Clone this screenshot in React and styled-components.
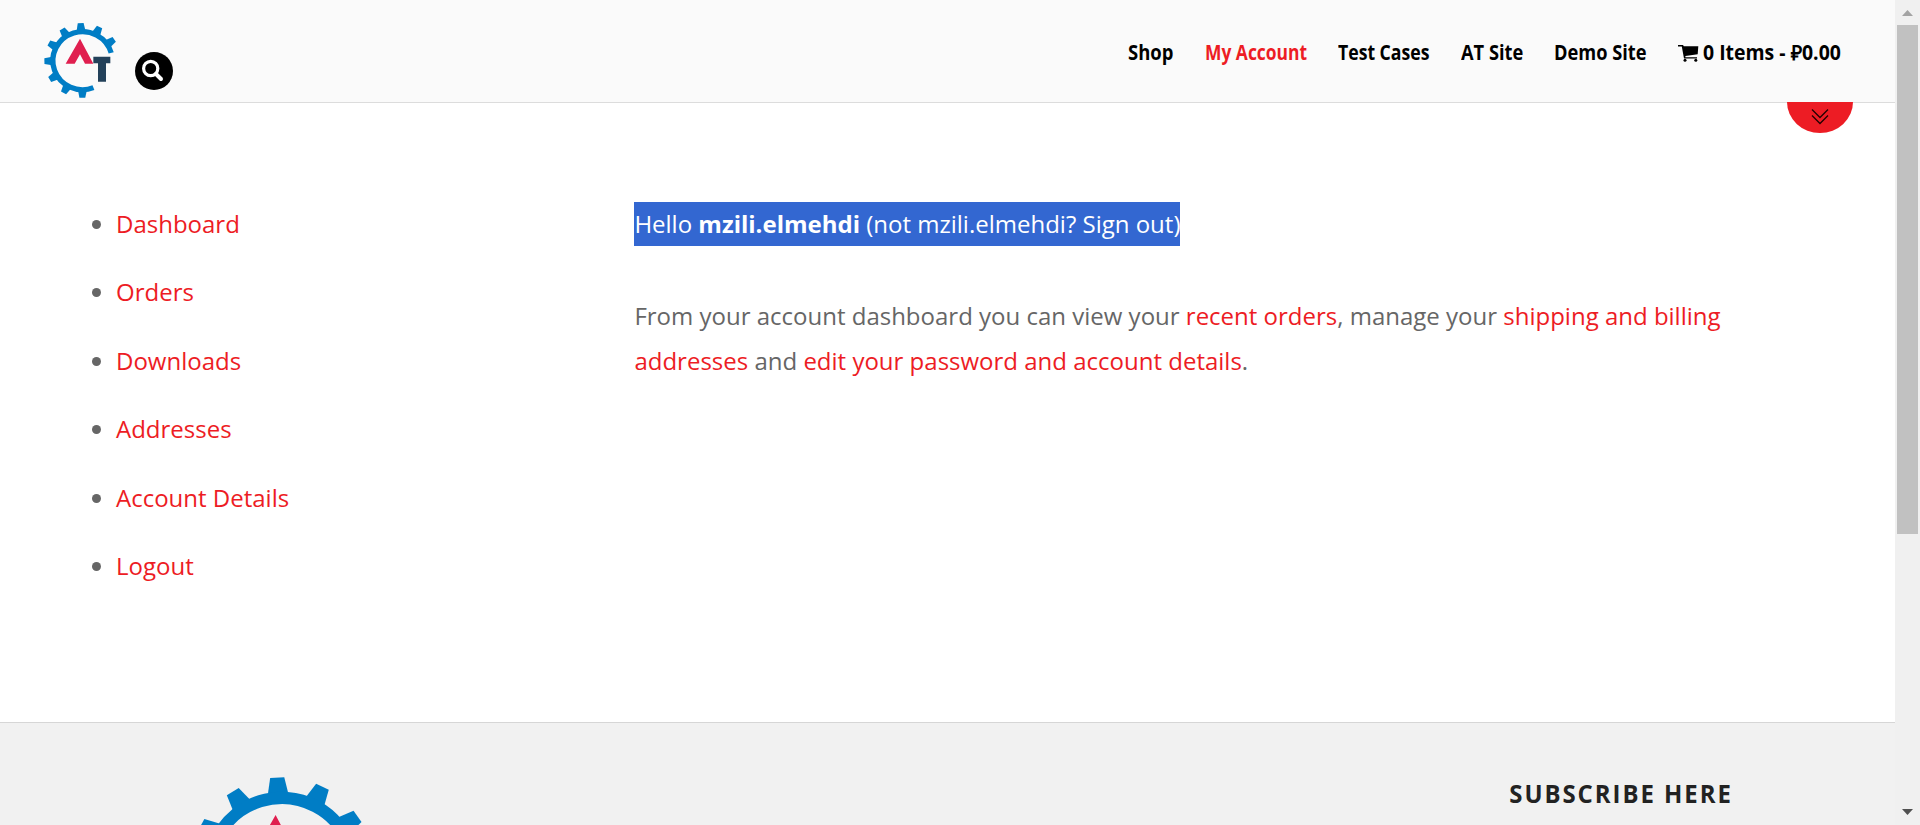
import React from 'react';
import styled, { createGlobalStyle } from 'styled-components';

const Global = createGlobalStyle`
  * { box-sizing: border-box; }
  html, body { margin: 0; overflow: hidden; background: #fff; }
  body { font-family: "Open Sans", "Noto Sans", sans-serif; font-size: 24px; color: #666; }
`;

const Screen = styled.div`
  display: flex;
  width: 1920px;
  height: 825px;
  overflow: hidden;
`;
const Page = styled.div`
  display: flex;
  flex-direction: column;
  width: 1895px;
  height: 825px;
`;
const Header = styled.header`
  position: relative;
  display: flex;
  flex: 0 0 103px;
  background: #fafafa;
  border-bottom: 1px solid #dcdcdc;
  padding: 22px 0 0 44px;
`;
const Search = styled.button`
  display: block;
  width: 38px;
  height: 38px;
  margin: 30px 0 0 17px;
  padding: 0;
  border: 0;
  border-radius: 50%;
  background: #000;
`;
const Nav = styled.nav`
  display: flex;
  margin-left: auto;
  padding-right: 55px;
  height: 60px;
  gap: 31px;
`;
const NavLink = styled.a`
  display: flex;
  width: ${(p) => p.$width}px;
  color: ${(p) => (p.$active ? '#ed1c24' : '#000')};
  font: 700 20.5px/60px "Open Sans", sans-serif;
  white-space: nowrap;
`;
const Condensed = styled.span`
  display: block;
  flex: none;
  transform: scaleX(${(p) => p.$ratio});
  transform-origin: 0 50%;
`;
const Toggle = styled.div`
  position: absolute;
  right: 42px;
  top: 102px;
  width: 66px;
  height: 31px;
  border-radius: 0 0 33px 33px / 0 0 31px 31px;
  background: #ed1c24;
`;
const Main = styled.main`
  display: flex;
  flex: 0 0 619px;
  padding-top: 99px;
`;
const Menu = styled.ul`
  width: 634px;
  margin: 0;
  padding: 0 0 0 92px;
  list-style: none;
`;
const MenuItem = styled.li`
  display: flex;
  align-items: center;
  height: 45px;
  margin-bottom: 23.4px;
  line-height: 35px;
  &::before {
    content: "";
    width: 9px;
    height: 9px;
    margin-right: 15px;
    border-radius: 50%;
    background: #666;
  }
  > a { padding-bottom: 2px; }
`;
const Link = styled.a`
  color: #ed1c24;
`;
const Content = styled.div`
  width: 1110px;
  padding-left: 0.4px;
`;
const Greeting = styled.p`
  width: max-content;
  height: 44px;
  margin: 0 0 47px;
  line-height: 44px;
  background: #3367d1;
  color: #fff;
  white-space: nowrap;
`;
const Copy = styled.p`
  margin: 0;
  line-height: 45px;
`;
const Footer = styled.footer`
  display: flex;
  justify-content: space-between;
  flex: 1;
  border-top: 1px solid #d6d6d6;
  background: #f1f1f1;
  padding: 53px 162px 0 189px;
  overflow: hidden;
`;
const FooterTitle = styled.h4`
  margin: 1px 0 0;
  color: #222;
  font: 700 24.5px/34px "Open Sans", sans-serif;
  letter-spacing: 2px;
  white-space: nowrap;
  transform: scaleX(0.977);
  transform-origin: 100% 50%;
`;
const Scrollbar = styled.div`
  display: flex;
  flex-direction: column;
  align-items: center;
  justify-content: space-between;
  width: 25px;
  background: #f0f0f0;
`;
const Thumb = styled.div`
  width: 21px;
  height: 509px;
  margin-bottom: auto;
  background: #c1c1c1;
`;
const Icon = styled.svg`
  display: block;
  flex: none;
  overflow: visible;
`;

const teeth = [-34.5, -63.8, -93, -122.5, -152, -181, -210.5, -240, -269.5];

function Logo({ width, height }) {
  return (
    <Icon width={width} height={height} viewBox="72 68 222 228">
      <g transform="translate(188 182) scale(1.025 1)">
        {teeth.map((a) => (
          <path key={a} d="M89-13L112-8.6V8.6L89 13z" fill="#007dc5" transform={`rotate(${a})`} />
        ))}
        <path d="M83.5-23A87 87 0 1 0 31.5 81.5" fill="none" stroke="#007dc5" strokeWidth="15.5" />
      </g>
      <path d="M180 117L220 192H195L180 163L164 192H137z" fill="#e01f4f" />
      <path d="M220 171H271V190H258V246H234V190H220z" fill="#23415a" />
    </Icon>
  );
}

const navItems = [
  { label: 'Shop', width: 46, ratio: 0.9 },
  { label: 'My Account', width: 102, ratio: 0.85, active: true },
  { label: 'Test Cases', width: 92, ratio: 0.86 },
  { label: 'AT Site', width: 62, ratio: 0.89 },
  { label: 'Demo Site', width: 93, ratio: 0.89 },
];

export default function App() {
  return (
    <>
      <Global />
      <Screen>
        <Page>
          <Header>
            <Logo width={74} height={77} />
            <Search aria-label="Search">
              <Icon width="38" height="38" viewBox="0 0 38 38" fill="none" stroke="#fff">
                <circle cx="15.7" cy="16.5" r="7.1" strokeWidth="3.2" />
                <path d="M21 22l5 5" strokeWidth="4" strokeLinecap="round" />
              </Icon>
            </Search>
            <Nav>
              {navItems.map((n) => (
                <NavLink key={n.label} $width={n.width} $active={n.active}>
                  <Condensed $ratio={n.ratio}>{n.label}</Condensed>
                </NavLink>
              ))}
              <NavLink $width={162}>
                <Icon width="25" height="60" viewBox="0 0 25 60">
                  <path d="M0 23h5l.8 1.2H20.3l-.6 8L7.4 33.9v1.3H19v1.4H6L3.8 24.6H0z" />
                  <circle cx="7" cy="38.2" r="1.5" />
                  <circle cx="17.8" cy="38.2" r="1.5" />
                </Icon>
                <Condensed $ratio={0.948}>0 Items - ₽0.00</Condensed>
              </NavLink>
            </Nav>
            <Toggle>
              <Icon width="66" height="31" fill="none" stroke="#200" strokeWidth="1.3">
                <path d="M25 7.5l8 8 8-8M25 13.5l8 8 8-8" />
              </Icon>
            </Toggle>
          </Header>
          <Main>
            <Menu>
              {['Dashboard', 'Orders', 'Downloads', 'Addresses', 'Account Details', 'Logout'].map((t) => (
                <MenuItem key={t}><Link>{t}</Link></MenuItem>
              ))}
            </Menu>
            <Content>
              <Greeting>Hello <b>mzili.elmehdi</b> (not mzili.elmehdi? Sign out)</Greeting>
              <Copy>
                From your account dashboard you can view your <Link>recent orders</Link>, manage your <Link>shipping and billing addresses</Link> and <Link>edit your password and account details</Link>.
              </Copy>
            </Content>
          </Main>
          <Footer>
            <Logo width={178} height={182} />
            <FooterTitle>SUBSCRIBE HERE</FooterTitle>
          </Footer>
        </Page>
        <Scrollbar>
          <Icon width="25" height="25"><path d="M7 16h11l-5.5-6z" fill="#a3a3a3" /></Icon>
          <Thumb />
          <Icon width="25" height="25"><path d="M7 9h11l-5.5 6z" fill="#505050" /></Icon>
        </Scrollbar>
      </Screen>
    </>
  );
}
